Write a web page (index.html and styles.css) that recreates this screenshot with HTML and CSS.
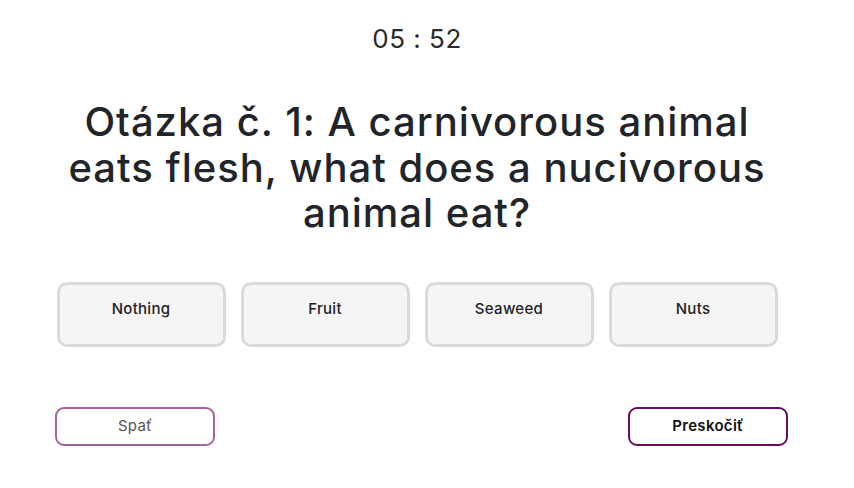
FILE: index.html
```html
<!DOCTYPE html>
<html lang="sk">
<head>
<meta charset="utf-8">
<link rel="stylesheet" href="styles.css">
</head>
<body>
<main class="page">
  <div class="timer">05 : 52</div>
  <h1 class="question">Otázka č. 1: A carnivorous animal eats flesh, what does a nucivorous animal eat?</h1>
  <div class="options">
    <button class="option">Nothing</button>
    <button class="option">Fruit</button>
    <button class="option">Seaweed</button>
    <button class="option">Nuts</button>
  </div>
  <div class="nav">
    <button class="btn btn-back">Spať</button>
    <button class="btn btn-skip">Preskočiť</button>
  </div>
</main>
</body>
</html>
```
FILE: styles.css
```css
html, body {
  margin: 0;
  padding: 0;
  background: #ffffff;
}
body {
  font-family: "Inter", "Noto Sans", sans-serif;
  color: #212529;
}
.page {
  width: 834px;
  display: flex;
  flex-direction: column;
  align-items: center;
  padding-top: 24px;
}
.timer {
  font-family: "Inter", sans-serif;
  font-size: 26px;
  line-height: 30px;
  color: #2b2b2b;
  letter-spacing: 0.5px;
}
.question {
  margin: 45px 0 0 0;
  width: 720px;
  text-align: center;
  font-size: 40px;
  font-weight: 500;
  line-height: 45.6px;
  letter-spacing: 1px;
  color: #212529;
}
.options {
  margin-top: 46px;
  display: flex;
  gap: 15px;
}
.option {
  width: 169px;
  height: 65px;
  box-sizing: border-box;
  border: 3px solid #dadada;
  border-radius: 10px;
  background: #f5f5f5;
  font-family: "Inter", sans-serif;
  font-size: 15px;
  font-weight: 500;
  color: #222222;
  padding: 12px 0 0 0;
  line-height: 24px;
  letter-spacing: 0.3px;
  display: flex;
  justify-content: center;
  align-items: flex-start;
}
.nav {
  margin-top: 60px;
  align-self: flex-start;
  margin-left: 55px;
  width: 733px;
  display: flex;
  justify-content: space-between;
}
.btn {
  width: 160px;
  height: 39px;
  box-sizing: border-box;
  border-radius: 9px;
  background: #ffffff;
  font-family: "Inter", sans-serif;
  font-size: 15px;
  line-height: 20px;
  padding: 0;
  letter-spacing: 0.3px;
}
.btn-back {
  border: 2px solid #a8609f;
  color: #555555;
  font-weight: 400;
}
.btn-skip {
  border: 2px solid #690a63;
  color: #111111;
  font-weight: 600;
}
```
